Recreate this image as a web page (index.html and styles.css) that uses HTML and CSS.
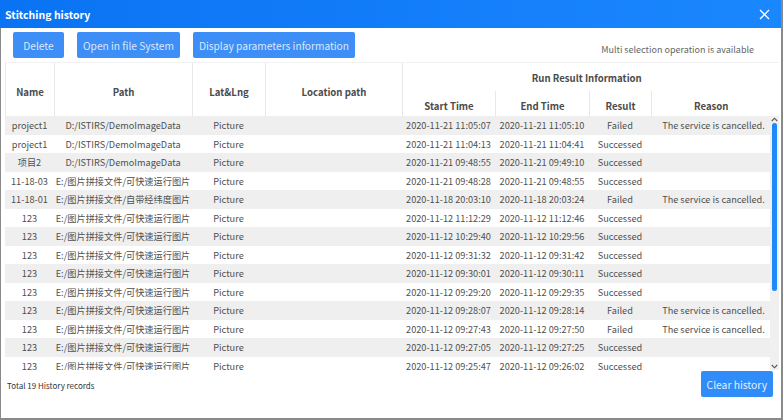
FILE: index.html
```html
<!DOCTYPE html>
<html>
<head>
<meta charset="utf-8">
<link rel="stylesheet" href="styles.css">
</head>
<body>
<div class="window">
  <div class="titlebar">
    <span class="title">Stitching history</span>
    <svg class="close" width="11" height="11" viewBox="0 0 11 11"><path d="M1 1 L10 10 M10 1 L1 10" stroke="#fff" stroke-width="1.3" fill="none"/></svg>
  </div>
  <div class="toolbar">
    <button class="btn">Delete</button>
    <button class="btn">Open in file System</button>
    <button class="btn">Display parameters information</button>
    <span class="hint">Multi selection operation is available</span>
  </div>
  <div class="grid">
    <div class="head-wrap">
      <table class="head">
        <colgroup><col class="c1"><col class="c2"><col class="c3"><col class="c4"><col class="c5"><col class="c6"><col class="c7"><col class="c8"></colgroup>
        <tr class="h1">
          <th rowspan="2">Name</th>
          <th rowspan="2">Path</th>
          <th rowspan="2">Lat&amp;Lng</th>
          <th rowspan="2">Location path</th>
          <th colspan="4" class="group">Run Result Information</th>
        </tr>
        <tr class="h2">
          <th>Start Time</th>
          <th>End Time</th>
          <th>Result</th>
          <th class="last">Reason</th>
        </tr>
      </table>
    </div>
    <div class="body-wrap">
      <div class="body">
        <table class="rows">
          <colgroup><col class="c1"><col class="c2"><col class="c3"><col class="c4"><col class="c5"><col class="c6"><col class="c7"><col class="c8"></colgroup>
          <tr><td>project1</td><td>D:/ISTIRS/DemoImageData</td><td>Picture</td><td></td><td>2020-11-21 11:05:07</td><td>2020-11-21 11:05:10</td><td>Failed</td><td>The service is cancelled.</td></tr>
          <tr><td>project1</td><td>D:/ISTIRS/DemoImageData</td><td>Picture</td><td></td><td>2020-11-21 11:04:13</td><td>2020-11-21 11:04:41</td><td>Successed</td><td></td></tr>
          <tr><td>项目2</td><td>D:/ISTIRS/DemoImageData</td><td>Picture</td><td></td><td>2020-11-21 09:48:55</td><td>2020-11-21 09:49:10</td><td>Successed</td><td></td></tr>
          <tr><td>11-18-03</td><td>E:/图片拼接文件/可快速运行图片</td><td>Picture</td><td></td><td>2020-11-21 09:48:28</td><td>2020-11-21 09:48:55</td><td>Successed</td><td></td></tr>
          <tr><td>11-18-01</td><td>E:/图片拼接文件/自带经纬度图片</td><td>Picture</td><td></td><td>2020-11-18 20:03:10</td><td>2020-11-18 20:03:24</td><td>Failed</td><td>The service is cancelled.</td></tr>
          <tr><td>123</td><td>E:/图片拼接文件/可快速运行图片</td><td>Picture</td><td></td><td>2020-11-12 11:12:29</td><td>2020-11-12 11:12:46</td><td>Successed</td><td></td></tr>
          <tr><td>123</td><td>E:/图片拼接文件/可快速运行图片</td><td>Picture</td><td></td><td>2020-11-12 10:29:40</td><td>2020-11-12 10:29:56</td><td>Successed</td><td></td></tr>
          <tr><td>123</td><td>E:/图片拼接文件/可快速运行图片</td><td>Picture</td><td></td><td>2020-11-12 09:31:32</td><td>2020-11-12 09:31:42</td><td>Successed</td><td></td></tr>
          <tr><td>123</td><td>E:/图片拼接文件/可快速运行图片</td><td>Picture</td><td></td><td>2020-11-12 09:30:01</td><td>2020-11-12 09:30:11</td><td>Successed</td><td></td></tr>
          <tr><td>123</td><td>E:/图片拼接文件/可快速运行图片</td><td>Picture</td><td></td><td>2020-11-12 09:29:20</td><td>2020-11-12 09:29:35</td><td>Successed</td><td></td></tr>
          <tr><td>123</td><td>E:/图片拼接文件/可快速运行图片</td><td>Picture</td><td></td><td>2020-11-12 09:28:07</td><td>2020-11-12 09:28:14</td><td>Failed</td><td>The service is cancelled.</td></tr>
          <tr><td>123</td><td>E:/图片拼接文件/可快速运行图片</td><td>Picture</td><td></td><td>2020-11-12 09:27:43</td><td>2020-11-12 09:27:50</td><td>Failed</td><td>The service is cancelled.</td></tr>
          <tr><td>123</td><td>E:/图片拼接文件/可快速运行图片</td><td>Picture</td><td></td><td>2020-11-12 09:27:05</td><td>2020-11-12 09:27:25</td><td>Successed</td><td></td></tr>
          <tr><td>123</td><td>E:/图片拼接文件/可快速运行图片</td><td>Picture</td><td></td><td>2020-11-12 09:25:47</td><td>2020-11-12 09:26:02</td><td>Successed</td><td></td></tr>
        </table>
      </div>
      <div class="scrollbar">
        <svg class="arrow" width="7" height="5" viewBox="0 0 7 5"><path d="M0.8 4 L3.5 1.2 L6.2 4" stroke="#555" stroke-width="1.1" fill="none"/></svg>
        <div class="thumb"></div>
        <div class="track-rest"></div>
        <svg class="arrow" width="7" height="5" viewBox="0 0 7 5"><path d="M0.8 1 L3.5 3.8 L6.2 1" stroke="#555" stroke-width="1.1" fill="none"/></svg>
      </div>
    </div>
  </div>
  <div class="footer">
    <span class="total">Total 19 History records</span>
    <button class="btn btn-clear">Clear history</button>
  </div>
</div>
</body>
</html>
```

FILE: styles.css
```css
html, body {
  margin: 0;
  padding: 0;
}
body {
  background: #8a8a8a;
  width: 783px;
  height: 420px;
  overflow: hidden;
  font-family: "Noto Sans CJK SC", "Noto Sans", sans-serif;
}
.window {
  margin-left: 1px;
  width: 780px;
  height: 418px;
  background: #ffffff;
  display: flex;
  flex-direction: column;
}
.titlebar {
  height: 28px;
  flex: none;
  margin-left: -1px;
  padding: 0 11px 0 5px;
  display: flex;
  align-items: center;
  justify-content: space-between;
  background: linear-gradient(to right, #0a73f3, #1b87fe);
}
.title {
  color: #ffffff;
  font-weight: bold;
  font-size: 10.5px;
}
.close {
  display: block;
}
.toolbar {
  flex: none;
  display: flex;
  align-items: flex-start;
  gap: 13px;
  padding: 4px 27px 4px 12px;
  height: 26px;
}
.btn {
  height: 26px;
  min-width: 51px;
  padding: 0 6px;
  border: none;
  border-radius: 2px;
  background: #3d8ef6;
  color: #dbe8fc;
  font-family: "Noto Sans CJK SC", "Noto Sans", sans-serif;
  font-size: 10.2px;
  cursor: pointer;
}
.hint {
  margin-left: auto;
  align-self: flex-end;
  font-size: 9px;
  color: #666666;
  padding-bottom: 2px;
}
.grid {
  flex: none;
  padding-left: 4px;
  width: 774px;
}
.head-wrap {
  width: 774px;
  border-top: 1px solid #f2f2f2;
  height: 53px;
}
table {
  border-collapse: collapse;
  table-layout: fixed;
  width: 765px;
}
.c1 { width: 49px; }
.c2 { width: 138px; }
.c3 { width: 73px; }
.c4 { width: 137px; }
.c5 { width: 93px; }
.c6 { width: 94px; }
.c7 { width: 62px; }
.c8 { width: 119px; }
.head th {
  font-size: 9.6px;
  font-weight: bold;
  color: #4b4b4b;
  border-left: 1px solid #e8e8e8;
  padding: 0;
  text-align: center;
}
.head .h1 th {
  height: 26px;
}
.head .h1 th[rowspan] {
  padding-top: 1px;
}
.head .h1 .group {
  padding-top: 2px;
}
.head .h2 th {
  height: 27px;
  padding-top: 1px;
}
.body-wrap {
  display: flex;
  height: 254px;
}
.body {
  width: 765px;
  height: 254px;
  overflow: hidden;
}
.rows td {
  height: 18.5px;
  padding: 0;
  font-size: 9.2px;
  color: #505050;
  text-align: center;
  white-space: nowrap;
  overflow: hidden;
}
.rows td:last-child {
  padding-left: 6px;
}
.rows tr:nth-child(odd) td {
  background: #efefef;
}
.rows tr:nth-child(even) td {
  background: #ffffff;
}
.scrollbar {
  width: 9px;
  background: #f0f0f0;
  display: flex;
  flex-direction: column;
  align-items: center;
}
.arrow {
  display: block;
  flex: none;
  margin: 1px 0 0;
}
.thumb {
  width: 5px;
  height: 168px;
  margin-top: 1px;
  border-radius: 3px;
  background: #1f88fb;
}
.track-rest {
  flex: 1;
}
.scrollbar .arrow:last-child {
  margin: 0 0 1px;
}
.footer {
  flex: 1;
  display: flex;
  justify-content: space-between;
  align-items: flex-start;
  padding: 1px 8px 0 6px;
}
.total {
  font-size: 8px;
  color: #333333;
  padding-top: 9px;
}
.btn-clear {
  height: 26px;
  padding: 0 6px;
  font-size: 10.3px;
  background: #2f8cf8;
  color: #e3eefd;
}
```
